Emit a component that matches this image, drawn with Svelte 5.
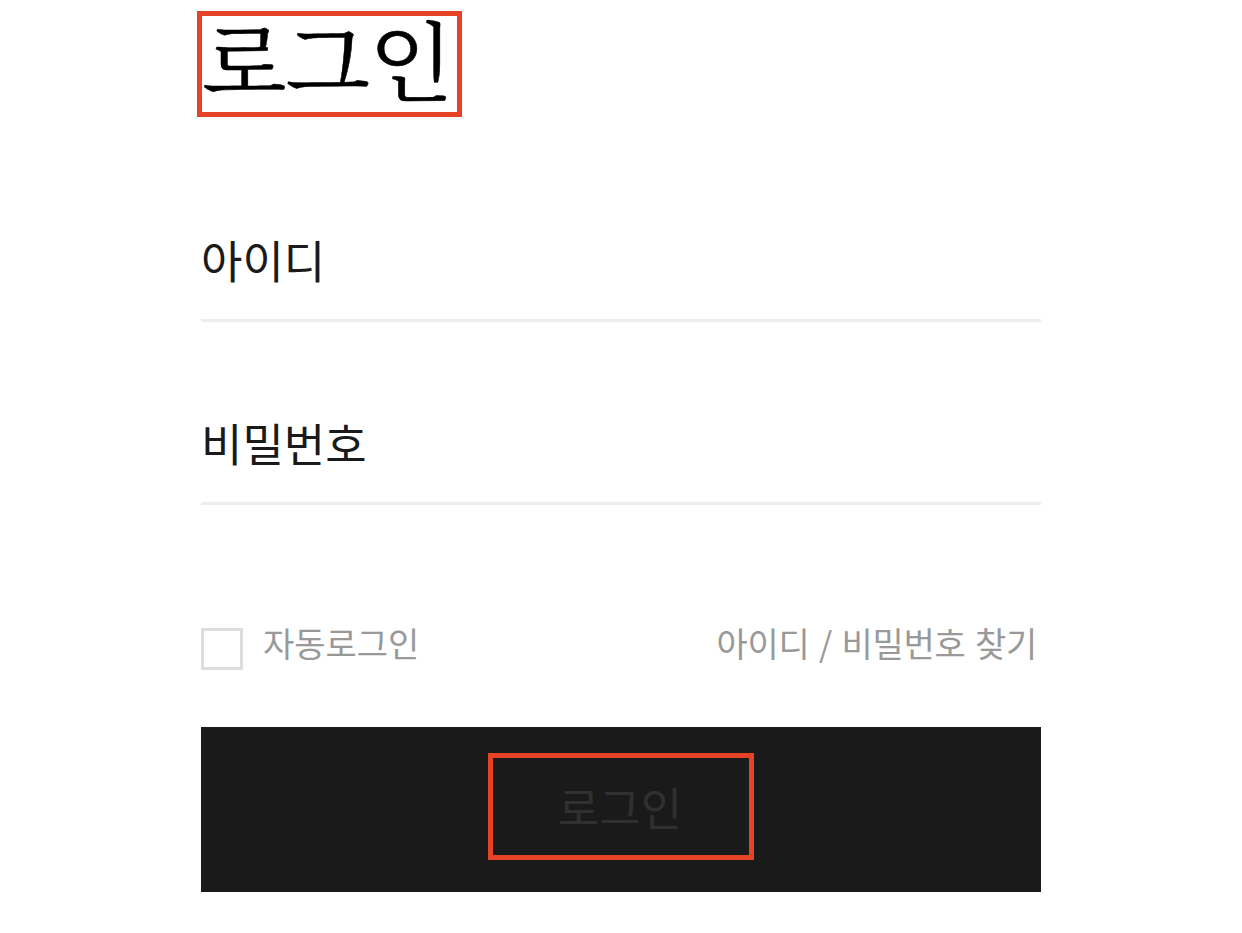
<script>
  let id = $state('');
  let password = $state('');
  let remember = $state(false);
</script>

<main>
  <h1>로그인</h1>
  <form onsubmit={(e) => e.preventDefault()}>
    <input class="field" type="text" placeholder="아이디" bind:value={id} />
    <input class="field second" type="password" placeholder="비밀번호" bind:value={password} />
    <div class="options">
      <label><input type="checkbox" bind:checked={remember} /><span>자동로그인</span></label>
      <span class="find">아이디 / 비밀번호 찾기</span>
    </div>
    <button type="submit"><span class="mark">로그인</span></button>
  </form>
</main>

<style>
  :global(body) { margin: 0; background: #fff; }
  main {
    box-sizing: border-box;
    width: 1242px;
    height: 933px;
    padding: 11px 201px 0;
    font-family: "Noto Sans CJK KR", sans-serif;
  }
  h1 {
    box-sizing: border-box;
    width: 265px;
    height: 106px;
    margin: 0 0 1px -4px;
    border: 5px solid #e64326;
    color: #000;
    font: 400 87.5px/82px "Noto Serif CJK KR", "Noto Sans CJK KR", serif;
    letter-spacing: -1px;
    -webkit-text-stroke: 0.5px #000;
    white-space: nowrap;
  }
  form { display: flex; flex-direction: column; }
  .field {
    box-sizing: border-box;
    width: 840px;
    height: 122px;
    margin: 82px 0 0;
    padding: 0;
    border: 0;
    border-bottom: 3px solid #eee;
    outline: 0;
    background: none;
    color: #1a1a1a;
    font: 400 45px "Noto Sans CJK KR", sans-serif;
  }
  .field.second { margin-top: 61px; }
  .field::placeholder { color: #1a1a1a; opacity: 1; }
  .options {
    display: flex;
    justify-content: space-between;
    height: 60px;
    margin-top: 114px;
    color: #999;
    font-size: 34px;
    line-height: 48px;
    white-space: nowrap;
  }
  label { display: flex; gap: 20px; }
  input[type='checkbox'] {
    appearance: none;
    box-sizing: border-box;
    width: 42px;
    height: 42px;
    margin: 9px 0 0;
    border: 3px solid #ddd;
    background: #fff;
  }
  .find { margin-right: 4px; letter-spacing: -0.3px; word-spacing: 2.2px; }
  button {
    display: flex;
    align-items: center;
    justify-content: center;
    height: 165px;
    margin: 48px 0 0;
    padding: 0 0 6px;
    border: 0;
    background: #1a1a1a;
    color: #303030;
    font: 400 45px/98px "Noto Sans CJK KR", sans-serif;
  }
  .mark {
    box-sizing: border-box;
    width: 266px;
    height: 107px;
    padding-right: 2px;
    border: 5px solid #e64326;
  }
</style>
